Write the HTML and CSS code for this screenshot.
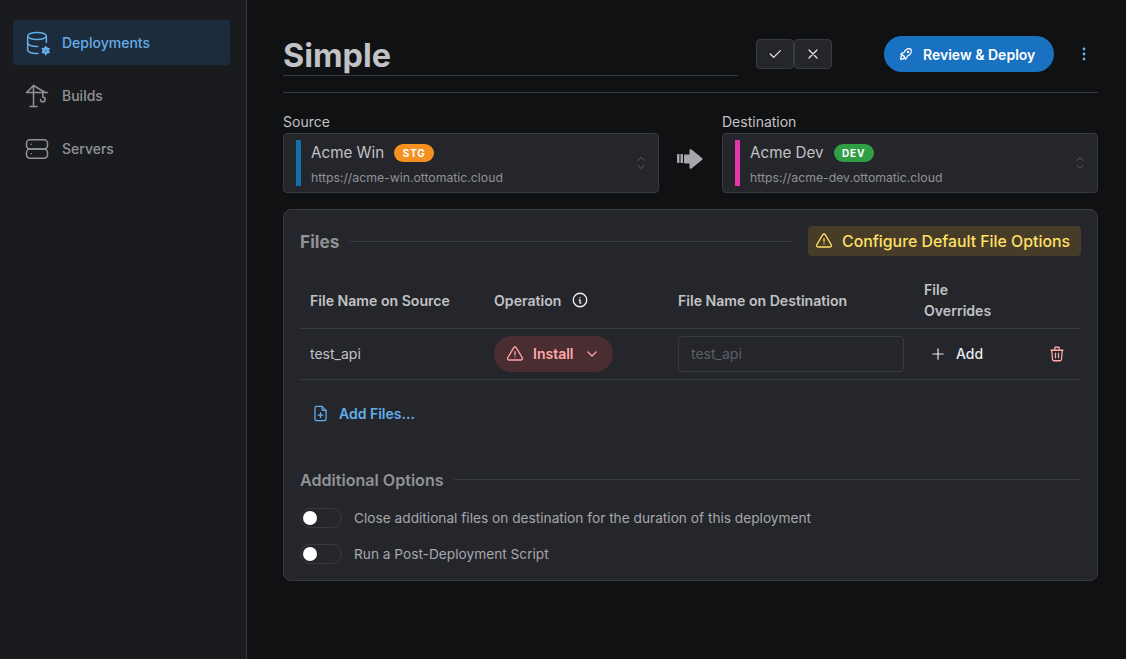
FILE: index.html
```html
<!DOCTYPE html>
<html lang="en">
<head>
    <meta charset="UTF-8">
    <title>Deployment</title>
    <link rel="stylesheet" href="styles.css">
</head>
<body>
    <nav class="sidebar">
        <a class="nav-item active" href="#">
            <svg class="nav-icon" viewBox="0 0 24 24" fill="none" stroke="currentColor" stroke-width="1.3" stroke-linecap="round" stroke-linejoin="round">
                <ellipse cx="12" cy="6" rx="8" ry="3"/>
                <path d="M4 6v6c0 1.657 3.582 3 8 3c.21 0 .42 0 .626 -.01"/>
                <path d="M20 11.500v-5.500"/>
                <path d="M4 12v6c0 1.657 3.582 3 8 3c.3 0 .59 0 .876 -.018"/>
                <circle cx="19.500" cy="18.500" r="1.800" stroke-width="2.400"/>
                <path d="M19.500 15v1M19.500 21v1M16.500 16.800l.9.5M21.600 19.700l.9.5M16.500 20.200l.9-.5M21.600 17.300l.9-.5" stroke-width="1.300"/>
            </svg>
            <span>Deployments</span>
        </a>
        <a class="nav-item" href="#">
            <svg class="nav-icon" viewBox="0 0 24 24" fill="none" stroke="currentColor" stroke-width="1.300" stroke-linecap="round" stroke-linejoin="round">
                <path d="M6 21h6"/>
                <path d="M9 21v-18l-6 6h18"/>
                <path d="M9 3l10 6"/>
                <path d="M17 9v4a2 2 0 1 1 -2 2"/>
            </svg>
            <span>Builds</span>
        </a>
        <a class="nav-item" href="#">
            <svg class="nav-icon" viewBox="0 0 24 24" fill="none" stroke="currentColor" stroke-width="1.300" stroke-linecap="round" stroke-linejoin="round">
                <rect x="3" y="4" width="18" height="8" rx="3"/>
                <rect x="3" y="12" width="18" height="8" rx="3"/>
                <path d="M7 8v.01M7 16v.01"/>
            </svg>
            <span>Servers</span>
        </a>
    </nav>

    <main class="content">
        <header class="title-row">
            <div class="title-field">Simple</div>
            <div class="title-actions">
                <button class="square-btn">
                    <svg viewBox="0 0 24 24" fill="none" stroke="currentColor" stroke-width="1.800" stroke-linecap="round" stroke-linejoin="round"><path d="M5 12l5 5l10 -10"/></svg>
                </button>
                <button class="square-btn">
                    <svg viewBox="0 0 24 24" fill="none" stroke="currentColor" stroke-width="1.800" stroke-linecap="round"><path d="M18 6l-12 12M6 6l12 12"/></svg>
                </button>
            </div>
            <button class="deploy-btn">
                <svg viewBox="0 0 24 24" fill="none" stroke="currentColor" stroke-width="1.800" stroke-linecap="round" stroke-linejoin="round">
                    <path d="M4 13a8 8 0 0 1 7 7a6 6 0 0 0 3 -5a9 9 0 0 0 6 -8a3 3 0 0 0 -3 -3a9 9 0 0 0 -8 6a6 6 0 0 0 -5 3"/>
                    <path d="M7 14a6 6 0 0 0 -3 6a6 6 0 0 0 6 -3"/>
                    <circle cx="15" cy="9" r="1"/>
                </svg>
                Review &amp; Deploy
            </button>
            <button class="menu-btn">
                <svg viewBox="0 0 4 14" fill="currentColor"><circle cx="2" cy="2" r="1.400"/><circle cx="2" cy="7" r="1.400"/><circle cx="2" cy="12" r="1.400"/></svg>
            </button>
        </header>

        <section class="endpoints">
            <div class="endpoint">
                <label>Source</label>
                <div class="select-box">
                    <span class="color-bar bar-blue"></span>
                    <div class="select-text">
                        <div class="select-name">Acme Win <span class="env-badge badge-orange">STG</span></div>
                        <div class="select-url">https://acme-win.ottomatic.cloud</div>
                    </div>
                    <svg class="chevrons" viewBox="0 0 10 16" fill="none" stroke="currentColor" stroke-width="1" stroke-linecap="round" stroke-linejoin="round"><path d="M2 5.500L5 2.500l3 3M2 10.500l3 3 3-3"/></svg>
                </div>
            </div>
            <svg class="arrow" viewBox="0 0 26 22" fill="currentColor">
                <rect x="0" y="6" width="2.500" height="9" rx=".6"/>
                <rect x="3.500" y="6" width="2.500" height="9" rx=".6"/>
                <path d="M7 7.500a1 1 0 0 1 1-1h4.500V2.500c0-1.200 1.200-1.700 2-1l10.500 8.500a1.300 1.300 0 0 1 0 2L14.500 20.500c-.8.700-2 .2-2-1V15.500H8a1 1 0 0 1-1-1z"/>
            </svg>
            <div class="endpoint">
                <label>Destination</label>
                <div class="select-box">
                    <span class="color-bar bar-pink"></span>
                    <div class="select-text">
                        <div class="select-name">Acme Dev <span class="env-badge badge-green">DEV</span></div>
                        <div class="select-url">https://acme-dev.ottomatic.cloud</div>
                    </div>
                    <svg class="chevrons" viewBox="0 0 10 16" fill="none" stroke="currentColor" stroke-width="1" stroke-linecap="round" stroke-linejoin="round"><path d="M2 5.500L5 2.500l3 3M2 10.500l3 3 3-3"/></svg>
                </div>
            </div>
        </section>

        <section class="card">
            <div class="section-head">
                <h2 class="files-title">Files</h2>
                <span class="head-line"></span>
                <button class="config-btn">
                    <svg viewBox="0 0 24 24" fill="none" stroke="currentColor" stroke-width="1.700" stroke-linecap="round" stroke-linejoin="round"><path d="M12 9v4"/><path d="M10.363 3.591l-8.106 13.534a1.914 1.914 0 0 0 1.636 2.871h16.214a1.914 1.914 0 0 0 1.636 -2.870l-8.106 -13.536a1.914 1.914 0 0 0 -3.274 0z"/><path d="M12 16h.01"/></svg>
                    Configure Default File Options
                </button>
            </div>

            <table class="files-table">
                <colgroup>
                    <col class="col-source">
                    <col class="col-operation">
                    <col class="col-dest">
                    <col class="col-overrides">
                    <col>
                </colgroup>
                <thead>
                    <tr>
                        <th>File Name on Source</th>
                        <th>
                            <span class="op-head">Operation
                                <svg viewBox="0 0 24 24" fill="none" stroke="currentColor" stroke-width="1.800" stroke-linecap="round" stroke-linejoin="round"><path d="M3 12a9 9 0 1 0 18 0a9 9 0 0 0 -18 0"/><path d="M12 9h.01"/><path d="M11 12h1v4h1"/></svg>
                            </span>
                        </th>
                        <th>File Name on Destination</th>
                        <th colspan="2">File<br>Overrides</th>
                    </tr>
                </thead>
                <tbody>
                    <tr>
                        <td>test_api</td>
                        <td>
                            <button class="install-btn">
                                <svg class="warn" viewBox="0 0 24 24" fill="none" stroke="currentColor" stroke-width="1.700" stroke-linecap="round" stroke-linejoin="round"><path d="M12 9v4"/><path d="M10.363 3.591l-8.106 13.534a1.914 1.914 0 0 0 1.636 2.871h16.214a1.914 1.914 0 0 0 1.636 -2.870l-8.106 -13.536a1.914 1.914 0 0 0 -3.274 0z"/><path d="M12 16h.01"/></svg>
                                Install
                                <svg class="caret" viewBox="0 0 12 12" fill="none" stroke="currentColor" stroke-width="1.300" stroke-linecap="round" stroke-linejoin="round"><path d="M2 4l4 4 4-4"/></svg>
                            </button>
                        </td>
                        <td><div class="name-input">test_api</div></td>
                        <td>
                            <button class="add-btn">
                                <svg viewBox="0 0 14 14" fill="none" stroke="currentColor" stroke-width="1.400" stroke-linecap="round"><path d="M7 1v12M1 7h12"/></svg>
                                Add
                            </button>
                        </td>
                        <td class="trash-cell">
                            <svg viewBox="0 0 24 24" fill="none" stroke="currentColor" stroke-width="1.700" stroke-linecap="round" stroke-linejoin="round"><path d="M4 7h16M10 11v6M14 11v6"/><path d="M5 7l1 12a2 2 0 0 0 2 2h8a2 2 0 0 0 2 -2l1 -12"/><path d="M9 7v-3a1 1 0 0 1 1 -1h4a1 1 0 0 1 1 1v3"/></svg>
                        </td>
                    </tr>
                </tbody>
            </table>

            <button class="add-files">
                <svg viewBox="0 0 24 24" fill="none" stroke="currentColor" stroke-width="1.600" stroke-linecap="round" stroke-linejoin="round"><path d="M14 3v4a1 1 0 0 0 1 1h4"/><path d="M17 21h-10a2 2 0 0 1 -2 -2v-14a2 2 0 0 1 2 -2h7l5 5v11a2 2 0 0 1 -2 2z"/><path d="M12 11v6M9 14h6"/></svg>
                Add Files...
            </button>

            <div class="section-head options-head">
                <h3 class="options-title">Additional Options</h3>
                <span class="head-line"></span>
            </div>
            <div class="toggle-row"><span class="toggle"></span>Close additional files on destination for the duration of this deployment</div>
            <div class="toggle-row"><span class="toggle"></span>Run a Post-Deployment Script</div>
        </section>
    </main>
</body>
</html>
```

FILE: styles.css
```css
* {
    box-sizing: border-box;
}

html, body {
    height: 100%;
}

body {
    margin: 0;
    display: flex;
    background-color: #101113;
    color: #c1c2c5;
    font-family: Inter, "Liberation Sans", sans-serif;
    font-size: 14px;
    overflow: hidden;
}

button {
    font-family: inherit;
    border: none;
    background: none;
    padding: 0;
    color: inherit;
}

svg {
    display: block;
    flex: none;
}

/* sidebar */
.sidebar {
    width: 247px;
    flex: none;
    display: flex;
    flex-direction: column;
    gap: 8px;
    padding: 20px 16px 0 13px;
    background-color: #1a1b1e;
    border-right: 1px solid #373a40;
}

.nav-item {
    display: flex;
    align-items: center;
    gap: 11px;
    height: 45px;
    padding-left: 10px;
    border-radius: 4px;
    color: #909296;
    text-decoration: none;
    font-size: 14px;
    font-weight: 500;
}

.nav-item.active {
    background-color: #1c2c3c;
    color: #63ade9;
}

.nav-icon {
    width: 28px;
    height: 28px;
}

/* title row */
.content {
    flex: 1;
    padding: 36px 28px 0 36px;
}

.title-row {
    display: flex;
    align-items: flex-start;
    height: 57px;
    border-bottom: 1px solid #373a40;
}

.title-field {
    width: 455px;
    height: 40px;
    border-bottom: 1px solid #373a40;
    color: #c1c2c5;
    font-size: 32.4px;
    font-weight: 700;
    line-height: 39px;
}

.title-actions {
    display: flex;
    margin-left: 18px;
    margin-top: 3px;
}

.square-btn {
    width: 38px;
    height: 30px;
    display: flex;
    align-items: center;
    justify-content: center;
    background-color: #25262b;
    border: 1px solid #373a40;
    border-radius: 4px;
    color: #e9ecef;
}

.square-btn svg {
    width: 16px;
    height: 16px;
}

.deploy-btn {
    display: flex;
    flex: none;
    align-items: center;
    gap: 9px;
    width: 170px;
    height: 36px;
    margin-left: 52px;
    padding-left: 14px;
    background-color: #1971c2;
    border-radius: 18px;
    color: #fff;
    font-size: 14px;
    font-weight: 600;
    white-space: nowrap;
}

.deploy-btn svg {
    width: 16px;
    height: 16px;
}

.menu-btn {
    width: 28px;
    height: 36px;
    margin-left: 16px;
    display: flex;
    align-items: center;
    justify-content: center;
    color: #63ade9;
}

.menu-btn svg {
    width: 4px;
    height: 14px;
}

/* source and destination */
.endpoints {
    display: flex;
    align-items: flex-end;
    margin-top: 20px;
}

.endpoint {
    width: 376px;
}

.endpoint label {
    display: block;
    font-size: 14px;
    line-height: 17px;
    margin-bottom: 3px;
    color: #c1c2c5;
}

.arrow {
    width: 26px;
    height: 22px;
    margin: 0 19px 23px 18px;
    color: #a6a7ab;
}

.select-box {
    display: flex;
    align-items: center;
    height: 60px;
    padding: 6px 12px;
    background-color: #25262b;
    border: 1px solid #373a40;
    border-radius: 4px;
}

.color-bar {
    width: 5px;
    height: 46px;
    flex: none;
    margin-right: 10px;
}

.bar-blue {
    background-color: #116fad;
}

.bar-pink {
    background-color: #e535ab;
}

.select-text {
    flex: 1;
}

.select-name {
    display: flex;
    align-items: center;
    gap: 10px;
    height: 24px;
    font-size: 15.2px;
    color: #c1c2c5;
}

.select-url {
    margin-top: 5px;
    font-size: 12.25px;
    line-height: 16px;
    color: #909296;
}

.env-badge {
    height: 18px;
    width: 40px;
    border-radius: 9px;
    color: #fff;
    font-size: 10px;
    font-weight: 700;
    letter-spacing: .8px;
    line-height: 18px;
    text-align: center;
}

.badge-orange {
    background-color: #f59120;
}

.badge-green {
    background-color: #2f9e44;
}

.chevrons {
    width: 10px;
    height: 16px;
    color: #5c5f66;
}

/* files card */
.card {
    height: 372px;
    margin-top: 16px;
    padding: 16px 16px 0;
    background-color: #25262b;
    border: 1px solid #373a40;
    border-radius: 8px;
}

.section-head {
    display: flex;
    align-items: center;
    height: 30px;
}

.head-line {
    flex: 1;
    height: 1px;
    background-color: #373a40;
}

.files-title {
    margin: 0 10px 0 0;
    color: #909296;
    font-size: 17.3px;
    font-weight: 700;
}

.config-btn {
    display: flex;
    align-items: center;
    gap: 9px;
    height: 30px;
    margin-left: 16px;
    padding: 0 11px 0 7px;
    background-color: #473c28;
    border-radius: 4px;
    color: #ffe066;
    font-size: 15.84px;
    font-weight: 500;
    white-space: nowrap;
}

.config-btn svg {
    width: 18px;
    height: 18px;
}

.files-table {
    width: 781px;
    margin-top: 17px;
    table-layout: fixed;
    border-collapse: collapse;
}

.col-source,
.col-operation {
    width: 184px;
}

.col-dest {
    width: 246px;
}

.col-overrides {
    width: 119px;
}

.files-table th {
    height: 55px;
    padding: 0 10px;
    border-bottom: 1px solid #373a40;
    color: #c1c2c5;
    font-size: 14.1px;
    font-weight: 600;
    line-height: 21px;
    text-align: left;
    vertical-align: middle;
}

.op-head {
    display: flex;
    align-items: center;
    gap: 10px;
}

.op-head svg {
    width: 18px;
    height: 18px;
    color: #e9ecef;
}

.files-table td {
    height: 51px;
    padding: 0 10px;
    border-bottom: 1px solid #373a40;
    color: #c1c2c5;
    font-size: 14px;
}

.install-btn {
    display: flex;
    align-items: center;
    height: 36px;
    width: 119px;
    padding-left: 12px;
    background-color: #4a2d31;
    border-radius: 18px;
    color: #ffa8a8;
    font-size: 14px;
    font-weight: 600;
}

.install-btn .warn {
    width: 18px;
    height: 18px;
    margin-right: 9px;
}

.install-btn .caret {
    width: 12px;
    height: 12px;
    margin-left: 12px;
}

.name-input {
    height: 36px;
    padding-left: 12px;
    background-color: #25262b;
    border: 1px solid #373a40;
    border-radius: 4px;
    color: #5c5f66;
    font-size: 14px;
    line-height: 34px;
}

.add-btn {
    display: flex;
    align-items: center;
    gap: 12px;
    margin-left: 8px;
    color: #e9ecef;
    font-size: 14px;
    font-weight: 500;
}

.add-btn svg {
    width: 12px;
    height: 12px;
}

.files-table td.trash-cell {
    padding: 0 0 0 15px;
    color: #ffa8a8;
}

.trash-cell svg {
    width: 18px;
    height: 18px;
}

.add-files {
    display: flex;
    align-items: center;
    gap: 9px;
    height: 36px;
    margin: 16px 0 0 11px;
    color: #63ade9;
    font-size: 14px;
    font-weight: 600;
}

.add-files svg {
    width: 19px;
    height: 19px;
}

/* additional options */
.options-head {
    margin-top: 33px;
    margin-bottom: 5px;
}

.options-title {
    margin: 0 10px 0 0;
    color: #909296;
    font-size: 16.1px;
    font-weight: 600;
}

.toggle-row {
    display: flex;
    align-items: center;
    gap: 12px;
    height: 36px;
    color: #a6a7ab;
    font-size: 13.7px;
}

.toggle {
    position: relative;
    width: 42px;
    height: 20px;
    background-color: #25262b;
    border: 1px solid #373a40;
    border-radius: 10px;
}

/* knob of the switch */
.toggle::before {
    content: "";
    position: absolute;
    left: 2px;
    top: 2px;
    width: 14px;
    height: 14px;
    border-radius: 50%;
    background-color: #fff;
}
```
